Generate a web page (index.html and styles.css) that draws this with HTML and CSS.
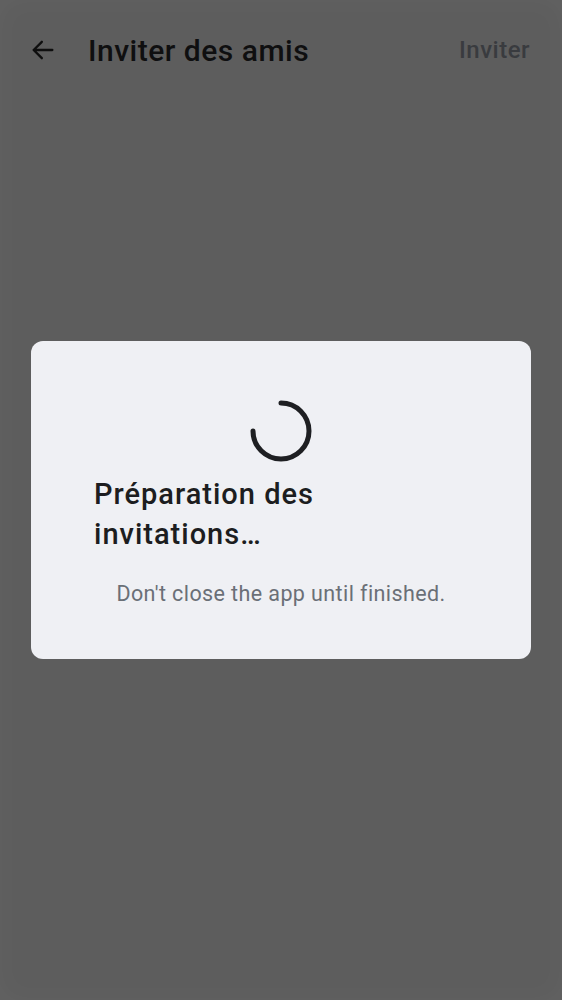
FILE: index.html
```html
<!DOCTYPE html>
<html lang="fr">
<head>
<meta charset="utf-8">
<link rel="stylesheet" href="styles.css">
</head>
<body>
<div class="screen">
  <header class="appbar">
    <svg class="back" width="28" height="28" viewBox="0 0 24 24" aria-hidden="true">
      <path d="M20 12H4M11 5l-7 7 7 7" fill="none" stroke="#0e0e0e" stroke-width="2" stroke-linecap="round" stroke-linejoin="round"/>
    </svg>
    <h1 class="title">Inviter des amis</h1>
    <span class="action">Inviter</span>
  </header>
  <main class="overlay">
    <div class="dialog">
      <svg class="spinner" width="66" height="66" viewBox="0 0 66 66" aria-hidden="true">
        <path d="M33 5 A28 28 0 1 1 5 33" fill="none" stroke="#1e1f22" stroke-width="5" stroke-linecap="round"/>
      </svg>
      <h2 class="heading">Préparation des invitations…</h2>
      <p class="sub">Don't close the app until finished.</p>
    </div>
  </main>
</div>
</body>
</html>
```

FILE: styles.css
```css
html, body {
  margin: 0;
  padding: 0;
}
body {
  background: #5d5d5d;
  font-family: Roboto, "Noto Sans", sans-serif;
}
.screen {
  width: 562px;
  height: 1000px;
  display: flex;
  flex-direction: column;
  box-shadow: inset 0 0 30px rgba(255, 255, 255, 0.035);
}
.appbar {
  height: 100px;
  display: flex;
  align-items: center;
  padding: 0 32px 0 29px;
  box-sizing: border-box;
}
.back {
  flex: none;
  margin-right: 31px;
}
.title {
  margin: 0;
  flex: 1;
  font-size: 30px;
  font-weight: 500;
  color: #0f0f10;
  letter-spacing: 0.5px;
}
.action {
  font-size: 24px;
  font-weight: 500;
  color: #393b3f;
  letter-spacing: 0.5px;
}
.overlay {
  flex: 1;
  display: flex;
  justify-content: center;
  padding-top: 241px;
}
.dialog {
  width: 500px;
  height: 318px;
  box-sizing: border-box;
  background: #eff0f4;
  border-radius: 12px;
  display: flex;
  flex-direction: column;
  align-items: center;
  padding: 57px 63px 0;
}
.spinner {
  flex: none;
}
.heading {
  align-self: stretch;
  margin: 10px 0 0;
  font-size: 29px;
  line-height: 40px;
  font-weight: 500;
  color: #1c1d20;
  letter-spacing: 1px;
}
.sub {
  margin: 27px 0 0;
  font-size: 21.5px;
  line-height: 26px;
  color: #6a6f77;
  letter-spacing: 0.4px;
  white-space: nowrap;
}
```
